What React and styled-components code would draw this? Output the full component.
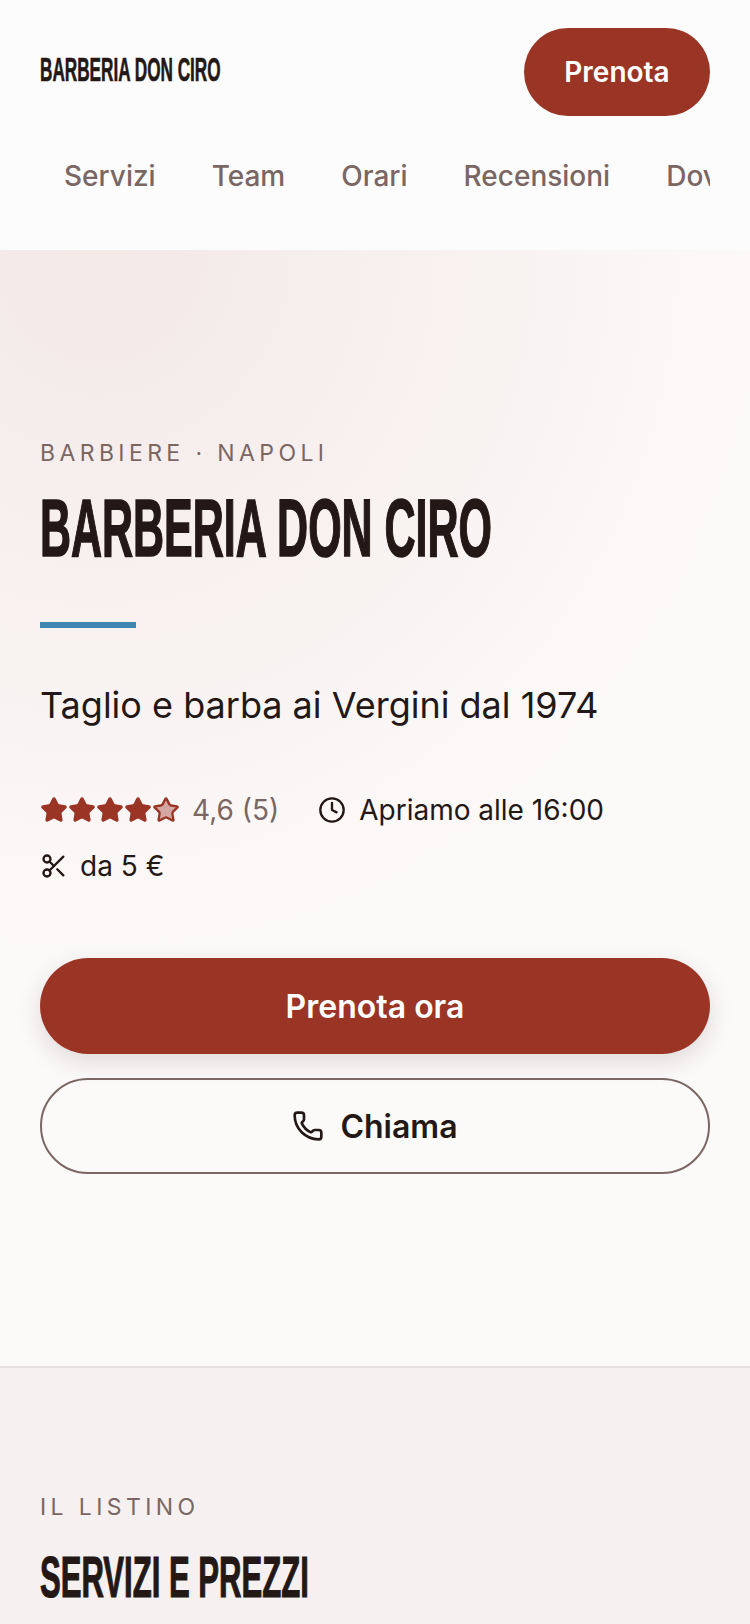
import React from 'react';
import styled, { createGlobalStyle } from 'styled-components';
import { Clock, Phone, Scissors, Star } from 'lucide-react';

const RED = '#9a3526';
const INK = '#231815';
const MUTED = '#7a6662';
const DISPLAY = '"Liberation Sans", Arial, sans-serif';

const GlobalStyle = createGlobalStyle`
  html, body {
    margin: 0;
    padding: 0;
    background: #fdfcfb;
    color: ${INK};
    font-family: Inter, "Liberation Sans", sans-serif;
  }
  * {
    box-sizing: border-box;
  }
`;

const Page = styled.div`
  height: 1624px;
  overflow: hidden;
`;

const Header = styled.header`
  height: 250px;
  padding: 28px 40px 0;
  background: #fdfcfc;
`;

const TopRow = styled.div`
  display: flex;
  align-items: center;
  justify-content: space-between;
`;

// squeezed and stroked to get the look of a tall poster face, no such font is installed
const Display = styled.div`
  font-family: ${DISPLAY};
  font-weight: 700;
  color: ${INK};
  white-space: nowrap;
  transform-origin: left center;
  transform: scaleX(${p => p.$squeeze});
  -webkit-text-stroke: 0.02em ${INK};
  font-size: ${p => p.$size}px;
  line-height: ${p => p.$line}px;
`;

const Logo = styled(Display)`
  margin-bottom: 7px;
`;

const HeroTitle = styled(Display)`
  margin-top: 12px;
`;

const ListinoTitle = styled(Display)`
  margin-top: 23px;
`;

const HeaderButton = styled.button`
  width: 186px;
  height: 88px;
  border: 0;
  border-radius: 44px;
  background: ${RED};
  color: #fff;
  font: 600 28px Inter, sans-serif;
`;

const Nav = styled.nav`
  display: flex;
  gap: 8px;
  margin-top: 27px;
  overflow: hidden;
`;

const NavLink = styled.a`
  flex: none;
  padding: 16px 24px;
  font-size: 28px;
  font-weight: 500;
  line-height: 34px;
  color: ${MUTED};
`;

const Hero = styled.section`
  height: 1116px;
  padding: 188px 40px 0;
  background:
    radial-gradient(ellipse 680px 720px at 100px 0, #f3e9e7 0%, #f8f2f1 55%, rgba(252, 250, 249, 0) 100%),
    #fcfaf9;
`;

const Eyebrow = styled.div`
  font-size: 23px;
  line-height: 30px;
  letter-spacing: 4.4px;
  color: ${MUTED};
`;

const Bar = styled.div`
  width: 96px;
  height: 6px;
  margin-top: 46px;
  background: #3f86b0;
`;

const Tagline = styled.p`
  margin: 55px 0 0;
  font-size: 36px;
  line-height: 44px;
  color: ${INK};
`;

const MetaRow = styled.div`
  display: flex;
  flex-wrap: wrap;
  align-items: center;
  column-gap: 39px;
  row-gap: 20px;
  margin-top: 65px;
  font-size: 28px;
  line-height: 36px;
`;

const MetaItem = styled.div`
  display: flex;
  align-items: center;
  gap: ${p => p.$gap}px;
  color: ${p => p.$muted ? MUTED : INK};
`;

const Stars = styled.div`
  display: flex;
`;

const Actions = styled.div`
  display: flex;
  flex-direction: column;
  gap: 24px;
  margin-top: 74px;
`;

const CtaButton = styled.button`
  display: flex;
  align-items: center;
  justify-content: center;
  gap: 16px;
  width: 100%;
  height: 96px;
  border: ${p => p.$outline ? `2px solid ${MUTED}` : '0'};
  border-radius: 48px;
  background: ${p => p.$outline ? 'transparent' : RED};
  color: ${p => p.$outline ? INK : '#fff'};
  box-shadow: ${p => p.$outline ? 'none' : '0 8px 24px rgba(35, 24, 21, 0.14)'};
  font: 600 32px Inter, sans-serif;
`;

const Listino = styled.section`
  height: 258px;
  padding: 124px 40px 0;
  border-top: 2px solid #e6e0de;
  background: #f6f0f0;
`;

const App = () => (
  <Page>
    <GlobalStyle />
    <Header>
      <TopRow>
        <Logo $size={34} $line={40} $squeeze={0.505}>BARBERIA DON CIRO</Logo>
        <HeaderButton>Prenota</HeaderButton>
      </TopRow>
      <Nav>
        <NavLink>Servizi</NavLink>
        <NavLink>Team</NavLink>
        <NavLink>Orari</NavLink>
        <NavLink>Recensioni</NavLink>
        <NavLink>Dove</NavLink>
      </Nav>
    </Header>
    <Hero>
      <Eyebrow>BARBIERE · NAPOLI</Eyebrow>
      <HeroTitle $size={82} $line={96} $squeeze={0.524}>BARBERIA DON CIRO</HeroTitle>
      <Bar />
      <Tagline>Taglio e barba ai Vergini dal 1974</Tagline>
      <MetaRow>
        <MetaItem $muted $gap={12}>
          <Stars>
            {[1, 1, 1, 1, 0.4].map((alpha, i) => (
              <Star key={i} size={28} color={RED} fill={RED} fillOpacity={alpha} strokeWidth={2} />
            ))}
          </Stars>
          4,6 (5)
        </MetaItem>
        <MetaItem $gap={13}>
          <Clock size={28} strokeWidth={2} />
          Apriamo alle 16:00
        </MetaItem>
        <MetaItem $gap={12}>
          <Scissors size={28} strokeWidth={2} />
          da 5 €
        </MetaItem>
      </MetaRow>
      <Actions>
        <CtaButton>Prenota ora</CtaButton>
        <CtaButton $outline>
          <Phone size={32} strokeWidth={2} />
          Chiama
        </CtaButton>
      </Actions>
    </Hero>
    <Listino>
      <Eyebrow>IL LISTINO</Eyebrow>
      <ListinoTitle $size={58} $line={64} $squeeze={0.536}>SERVIZI E PREZZI</ListinoTitle>
    </Listino>
  </Page>
);

export default App;
